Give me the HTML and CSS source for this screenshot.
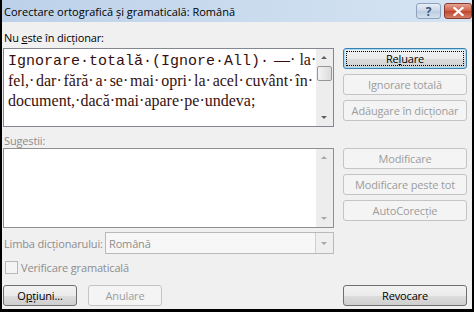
FILE: index.html
```html
<!DOCTYPE html>
<html lang="ro">
<head>
    <meta charset="UTF-8">
    <title>Corectare ortografică şi gramaticală</title>
    <link rel="stylesheet" href="styles.css">
</head>
<body>
    <div class="window">
        <!-- Title bar -->
        <div class="titlebar">
            <span class="title">Corectare ortografică şi gramaticală: Română</span>
            <div class="caption-buttons">
                <span class="cap help">?</span>
                <span class="cap close">
                    <svg width="11" height="9" viewBox="0 0 11 9">
                        <path d="M1.5 1 L9.5 8 M9.5 1 L1.5 8" stroke="#fff" stroke-width="2.2" stroke-linecap="square"/>
                    </svg>
                </span>
            </div>
        </div>

        <div class="content">
            <div class="label label-top">Nu <u>e</u>ste în dicționar:</div>

            <!-- Not in dictionary -->
            <div class="section">
                <div class="textbox">
                    <div class="text">
                        <div class="line first"><span class="mono">Ignorare·totală·(Ignore·All)·</span><span class="dash">—·</span> la·</div>
                        <div class="line justify">fel,· dar· fără· a· se· mai· opri· la· acel· cuvânt· în·</div>
                        <div class="line">document,·dacă·mai·apare·pe·undeva;</div>
                    </div>
                    <div class="scrollbar">
                        <div class="arrow up"></div>
                        <div class="thumb"></div>
                        <div class="track"></div>
                        <div class="arrow down"></div>
                    </div>
                </div>
                <div class="buttons">
                    <div class="btn default"><span class="focus">Re<u>l</u>uare</span></div>
                    <div class="btn disabled">Ignorare totală</div>
                    <div class="btn disabled">Adăugare în dicționar</div>
                </div>
            </div>

            <div class="label label-sug muted">Sugestii:</div>

            <!-- Suggestions -->
            <div class="section">
                <div class="textbox listbox">
                    <div class="text"></div>
                    <div class="scrollbar off">
                        <div class="arrow up"></div>
                        <div class="track"></div>
                        <div class="arrow down"></div>
                    </div>
                </div>
                <div class="buttons">
                    <div class="btn disabled">Modificare</div>
                    <div class="btn disabled">Modificare peste tot</div>
                    <div class="btn disabled">AutoCorecție</div>
                </div>
            </div>

            <div class="lang-row">
                <span class="muted lang-label">Limba dicționarului:</span>
                <div class="combo">
                    <span class="combo-value">Română</span>
                    <span class="combo-btn"><span class="arrow down"></span></span>
                </div>
            </div>

            <div class="check-row">
                <span class="checkbox"></span>
                <span class="muted">Verificare gramaticală</span>
            </div>

            <div class="bottom-row">
                <div class="btn small">O<u>p</u>țiuni...</div>
                <div class="btn small disabled">Anulare</div>
                <div class="spacer"></div>
                <div class="btn wide">Revocare</div>
            </div>
        </div>
    </div>
</body>
</html>
```

FILE: styles.css
```css
/* General */
body {
    margin: 0;
    background: #000;
    font-family: "Open Sans", "Noto Sans", sans-serif;
    font-size: 11px;
    letter-spacing: -0.15px;
    color: #000;
}

.window {
    width: 470px;
    height: 309px;
    margin-left: 2px;
    background: #f0f0f0;
    display: flex;
    flex-direction: column;
    overflow: hidden;
}

/* Title bar */
.titlebar {
    height: 22px;
    flex-shrink: 0;
    display: flex;
    align-items: center;
    justify-content: space-between;
    padding-left: 2px;
    background: linear-gradient(to right, #bcd1e9, #d6e4f3);
}

.title {
    font-size: 11px;
    letter-spacing: 0;
}

.caption-buttons {
    display: flex;
    gap: 3px;
}

.cap {
    height: 16px;
    box-sizing: border-box;
    border-radius: 3px;
    display: flex;
    align-items: center;
    justify-content: center;
}

.help {
    width: 25px;
    border: 1px solid #8ea2ba;
    background: linear-gradient(#e6eef7, #c9d7e7 50%, #bccde1 51%, #d3e0ee);
    color: #3e5573;
    font-weight: bold;
    font-size: 12px;
}

.close {
    width: 28px;
    border: 1px solid #8a3a2e;
    background: linear-gradient(#e5a394, #cf5f49 50%, #c1432c 51%, #d2806a);
}

/* Content */
.content {
    flex: 1;
    padding: 0 5px 0 1px;
    display: flex;
    flex-direction: column;
}

.label {
    line-height: 15px;
    padding-left: 1px;
}

.label-top {
    padding-top: 8px;
    margin-bottom: 3px;
}

.label-sug {
    padding-top: 6px;
}

.muted {
    color: #8d8d8d;
}

.section {
    display: flex;
    gap: 9px;
}

.textbox {
    width: 331px;
    height: 79px;
    flex-shrink: 0;
    box-sizing: border-box;
    border: 1px solid #828790;
    background: #fff;
    display: flex;
}

.listbox {
    height: 80px;
    border-color: #8e8f8f;
}

.text {
    flex: 1;
    padding: 0 3px 0 4px;
    font-family: "Liberation Serif", serif;
    font-size: 16px;
    letter-spacing: 0;
    color: #361010;
    overflow: hidden;
}

.line {
    height: 20px;
    line-height: 20px;
    white-space: nowrap;
}

.line.first {
    height: 22px;
    line-height: 22px;
}

.dash {
    margin-left: 5px;
}

.line.justify {
    text-align: justify;
    text-align-last: justify;
    word-spacing: -4px;
    white-space: normal;
}

.mono {
    font-family: "Liberation Mono", monospace;
    font-size: 15px;
}

/* Scrollbar */
.scrollbar {
    width: 17px;
    background: #ededed;
    display: flex;
    flex-direction: column;
}

.scrollbar .track {
    flex: 1;
}

.arrow {
    height: 17px;
    position: relative;
}

.arrow::after {
    content: "";
    position: absolute;
    left: 5px;
    top: 7px;
    border-left: 3px solid transparent;
    border-right: 3px solid transparent;
}

.arrow.up::after {
    border-bottom: 3px solid #606060;
}

.arrow.down::after {
    border-top: 3px solid #606060;
}

.scrollbar.off .arrow.up::after {
    border-bottom-color: #a8a8a8;
}

.scrollbar.off .arrow.down::after {
    border-top-color: #a8a8a8;
}

.thumb {
    height: 15px;
    margin: 0 1px;
    border: 1px solid #979797;
    border-radius: 2px;
    box-sizing: border-box;
    background: linear-gradient(to right, #f4f4f4, #dcdcdc);
}

/* Buttons */
.buttons {
    width: 124px;
    display: flex;
    flex-direction: column;
    gap: 5px;
}

.btn {
    height: 21px;
    flex-shrink: 0;
    box-sizing: border-box;
    border: 1px solid #707070;
    border-radius: 3px;
    background: linear-gradient(#f2f2f2, #ebebeb 50%, #dddddd 51%, #cfcfcf);
    text-align: center;
    line-height: 19px;
    white-space: nowrap;
}

.btn.default {
    border-color: #3c7fb1;
    box-shadow: inset 0 0 0 1px #a6dcf5;
    padding: 2px;
    line-height: 15px;
}

.btn.default .focus {
    display: block;
    height: 15px;
    box-sizing: border-box;
    border: 1px dotted #000;
    line-height: 13px;
}

.btn.disabled {
    border-color: #c2c4c6;
    background: #f4f4f4;
    color: #9c9c9c;
}

/* Language row */
.lang-row {
    margin-top: 4px;
    display: flex;
    align-items: center;
}

.lang-label {
    width: 101px;
    padding-left: 1px;
    white-space: nowrap;
}

.combo {
    width: 229px;
    height: 22px;
    box-sizing: border-box;
    border: 1px solid #b9b9b9;
    background: #f7f7f7;
    display: flex;
    align-items: center;
}

.combo-value {
    flex: 1;
    padding-left: 3px;
    color: #8d8d8d;
}

.combo-btn {
    width: 17px;
    height: 20px;
    border-left: 1px solid #d0d0d0;
    background: #efefef;
}

.combo-btn .arrow {
    height: 20px;
}

.combo-btn .arrow.down::after {
    top: 9px;
    border-top-color: #a8a8a8;
}

/* Checkbox row */
.check-row {
    margin-top: 6px;
    display: flex;
    align-items: center;
    gap: 3px;
    height: 14px;
}

.checkbox {
    width: 13px;
    height: 13px;
    margin-left: 2px;
    box-sizing: border-box;
    border: 1px solid #b8b8b8;
    background: #f4f4f4;
}

/* Bottom buttons */
.bottom-row {
    margin-top: 11px;
    display: flex;
    gap: 11px;
}

.btn.small {
    width: 74px;
}

.spacer {
    flex: 1;
}

.btn.wide {
    width: 124px;
}
```
